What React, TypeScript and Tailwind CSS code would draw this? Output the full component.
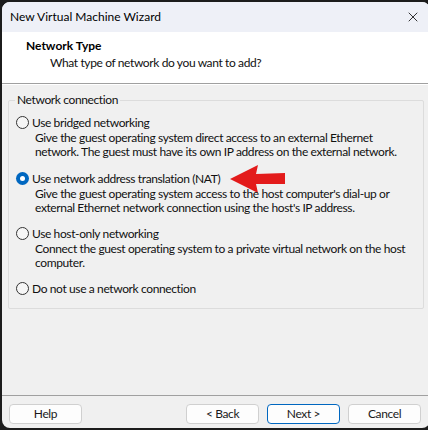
import { X } from 'lucide-react';

// 网络类型选项
interface NetOption {
  label: string;
  desc?: string[];
  checked?: boolean;
}

const OPTIONS: NetOption[] = [
  {
    label: 'Use bridged networking',
    desc: [
      'Give the guest operating system direct access to an external Ethernet',
      'network. The guest must have its own IP address on the external network.',
    ],
  },
  {
    label: 'Use network address translation (NAT)',
    desc: [
      "Give the guest operating system access to the host computer's dial-up or",
      "external Ethernet network connection using the host's IP address.",
    ],
    checked: true,
  },
  {
    label: 'Use host-only networking',
    desc: [
      'Connect the guest operating system to a private virtual network on the host',
      'computer.',
    ],
  },
  { label: 'Do not use a network connection' },
];

function Radio({ checked }: { checked?: boolean }) {
  if (checked) {
    return (
      <span className="w-[13px] h-[13px] rounded-full bg-[#0067c0] flex items-center justify-center shrink-0">
        <span className="w-[5px] h-[5px] rounded-full bg-white" />
      </span>
    );
  }
  return <span className="w-[13px] h-[13px] rounded-full border border-[#333] bg-[#f6f6f6] shrink-0" />;
}

function Button({ label, primary }: { label: string; primary?: boolean }) {
  return (
    <button
      className={`w-[73px] h-[20px] rounded-[4px] bg-[#fdfdfd] text-[12px] leading-none text-[#1a1a1a] border ${
        primary ? 'border-[#0067c0]' : 'border-[#d0d0d0]'
      }`}
    >
      {label}
    </button>
  );
}

export default function App() {
  return (
    <div
      className="w-[428px] h-[430px] bg-[#1c1c1c] pl-[2px] pt-[2px] overflow-hidden"
      style={{ fontFamily: 'Lato, "Liberation Sans", sans-serif' }}
    >
      <div className="w-[428px] h-[426px] rounded-lg bg-[#f0f0f0] overflow-hidden flex flex-col text-[12px] text-[#111] whitespace-nowrap tracking-[-0.38px]">
        {/* 标题栏 */}
        <div className="h-[30px] bg-[#eef0f7] flex items-center justify-between pl-[8px] pr-[8px] shrink-0">
          <span className="text-[12px] text-black tracking-normal">New Virtual Machine Wizard</span>
          <X size={16} strokeWidth={1.2} className="text-black mr-[1px]" />
        </div>

        {/* 头部 */}
        <div className="h-[52px] bg-white border-b border-[#a0a0a0] pl-[24px] pt-[6px] shrink-0">
          <div className="font-bold leading-[16px] text-black tracking-normal">Network Type</div>
          <div className="pl-[24px] leading-[16px] mt-[1px]">What type of network do you want to add?</div>
        </div>
        <div className="h-px bg-white shrink-0" />

        {/* 网络连接分组 */}
        <div className="px-[6px] pt-[15px] shrink-0">
          <div className="relative border border-[#dcdcdc] rounded-[2px] h-[209px] pl-[7px] pt-[14px]">
            <span className="absolute left-[6px] -top-[9px] bg-[#f0f0f0] px-[2px] leading-[16px]">
              Network connection
            </span>
            <div className="flex flex-col gap-[11px]">
              {OPTIONS.map((o, i) => (
                <div key={o.label} className={i === 0 ? 'mb-[1px]' : ''}>
                  <div className="flex items-center gap-[3px] h-[15px]">
                    <Radio checked={o.checked} />
                    <span className="leading-[15px]">{o.label}</span>
                    {o.checked && (
                      <svg width="58" height="28" viewBox="0 0 58 28" className="ml-[6px] shrink-0">
                        <polygon points="1,14 29,0 27,9 56,8 56,19 27,19 29,28" fill="#e31b1b" />
                      </svg>
                    )}
                  </div>
                  {o.desc && (
                    <div className="pl-[19px] mt-[1px] leading-[14px]">
                      {o.desc.map((d) => (
                        <div key={d}>{d}</div>
                      ))}
                    </div>
                  )}
                </div>
              ))}
            </div>
          </div>
        </div>

        <div className="flex-1" />

        {/* 底部按钮 */}
        <div className="border-t border-[#a0a0a0] h-[33px] shrink-0 flex items-start pt-[8px] pl-[7px] pr-[9px]">
          <Button label="Help" />
          <div className="flex-1" />
          <div className="flex gap-[8px]">
            <Button label="< Back" />
            <Button label="Next >" primary />
            <Button label="Cancel" />
          </div>
        </div>
      </div>
    </div>
  );
}
